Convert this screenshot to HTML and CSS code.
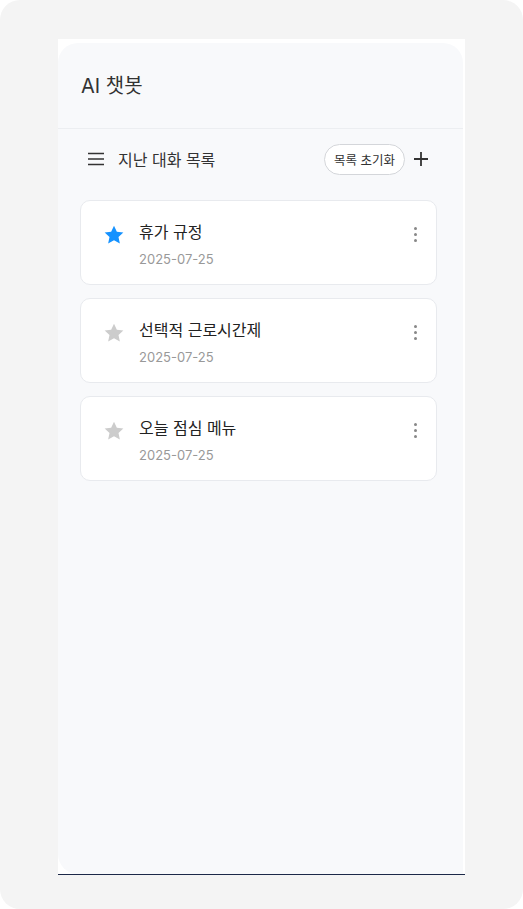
FILE: index.html
```html
<!DOCTYPE html>
<html lang="ko">
<head>
    <meta charset="UTF-8">
    <meta name="viewport" content="width=device-width, initial-scale=1.0">
    <title>AI 챗봇</title>
    <link rel="stylesheet" href="styles.css">
</head>
<body>
    <div class="frame">
        <div class="screen">
            <div class="panel">
                <header class="app-header">
                    <h1>AI 챗봇</h1>
                </header>

                <div class="toolbar">
                    <svg class="menu-icon" width="16" height="14" viewBox="0 0 16 14">
                        <path d="M0 1.5h16M0 7h16M0 12.5h16" stroke="#333" stroke-width="1.6"/>
                    </svg>
                    <span class="toolbar-title">지난 대화 목록</span>
                    <button class="reset-btn">목록 초기화</button>
                    <svg class="plus-icon" width="16" height="16" viewBox="0 0 16 16">
                        <path d="M8 1v14M1 8h14" stroke="#333" stroke-width="1.8"/>
                    </svg>
                </div>

                <div class="chat-list">
                    <div class="chat-card">
                        <svg class="star on" width="22" height="22" viewBox="0 0 24 24">
                            <path d="M12 1.8l3.1 6.6 7.1.8-5.3 4.9 1.5 7.1L12 17.6l-6.4 3.6 1.5-7.1-5.3-4.9 7.1-.8z"/>
                        </svg>
                        <div class="chat-text">
                            <div class="chat-title">휴가 규정</div>
                            <div class="chat-date">2025-07-25</div>
                        </div>
                        <span class="kebab"><i></i><i></i><i></i></span>
                    </div>

                    <div class="chat-card">
                        <svg class="star" width="22" height="22" viewBox="0 0 24 24">
                            <path d="M12 1.8l3.1 6.6 7.1.8-5.3 4.9 1.5 7.1L12 17.6l-6.4 3.6 1.5-7.1-5.3-4.9 7.1-.8z"/>
                        </svg>
                        <div class="chat-text">
                            <div class="chat-title">선택적 근로시간제</div>
                            <div class="chat-date">2025-07-25</div>
                        </div>
                        <span class="kebab"><i></i><i></i><i></i></span>
                    </div>

                    <div class="chat-card">
                        <svg class="star" width="22" height="22" viewBox="0 0 24 24">
                            <path d="M12 1.8l3.1 6.6 7.1.8-5.3 4.9 1.5 7.1L12 17.6l-6.4 3.6 1.5-7.1-5.3-4.9 7.1-.8z"/>
                        </svg>
                        <div class="chat-text">
                            <div class="chat-title">오늘 점심 메뉴</div>
                            <div class="chat-date">2025-07-25</div>
                        </div>
                        <span class="kebab"><i></i><i></i><i></i></span>
                    </div>
                </div>
            </div>
        </div>
    </div>
</body>
</html>
```

FILE: styles.css
```css
* {
    box-sizing: border-box;
}

body {
    margin: 0;
    background: #fff;
    font-family: "Inter", "Noto Sans CJK KR", sans-serif;
    color: #222;
}

.frame {
    height: 909px;
    background: #f4f4f4;
    border-radius: 20px;
    padding: 39px 58px 0;
}

.screen {
    width: 407px;
    height: 836px;
    background: #fff;
    border-bottom: 1px solid #1c2848;
    padding: 4px 2px 0 0;
    display: flex;
}

.panel {
    flex: 1;
    background: #f8f9fb;
    border-radius: 20px 20px 0 20px;
}

.app-header {
    height: 86px;
    padding: 0 0 3px 23px;
    display: flex;
    align-items: center;
    border-bottom: 1px solid #eceef1;
}

.app-header h1 {
    margin: 0;
    font-size: 20px;
    font-weight: 400;
    color: #333;
}

.toolbar {
    height: 60px;
    display: flex;
    align-items: center;
    padding: 0 34px 0 30px;
}

.menu-icon {
    margin-right: 14px;
}

.toolbar-title {
    font-size: 16px;
    color: #333;
    flex: 1;
}

.reset-btn {
    height: 31px;
    padding: 0 9px;
    border: 1px solid #d4d6da;
    border-radius: 16px;
    background: #fff;
    font-family: inherit;
    font-size: 12.5px;
    color: #333;
    margin-right: 8px;
    cursor: pointer;
}

.chat-list {
    padding: 11px 26px 0 22px;
    display: flex;
    flex-direction: column;
    gap: 13px;
}

.chat-card {
    height: 85px;
    background: #fff;
    border: 1px solid #e8eaee;
    border-radius: 10px;
    display: flex;
    align-items: flex-start;
    padding: 20px 19px 0 22px;
}

.star {
    fill: #cccccc;
    margin-top: 3px;
    margin-right: 14px;
}

.star.on {
    fill: #1592ff;
}

.chat-text {
    flex: 1;
}

.chat-title {
    font-size: 16px;
    line-height: 22px;
    color: #222;
}

.chat-date {
    margin-top: 6px;
    font-size: 13px;
    line-height: 20px;
    color: #999;
}

.kebab {
    display: flex;
    flex-direction: column;
    gap: 3px;
    margin-top: 6px;
}

.kebab i {
    width: 3px;
    height: 3px;
    border-radius: 50%;
    background: #888;
}
```
